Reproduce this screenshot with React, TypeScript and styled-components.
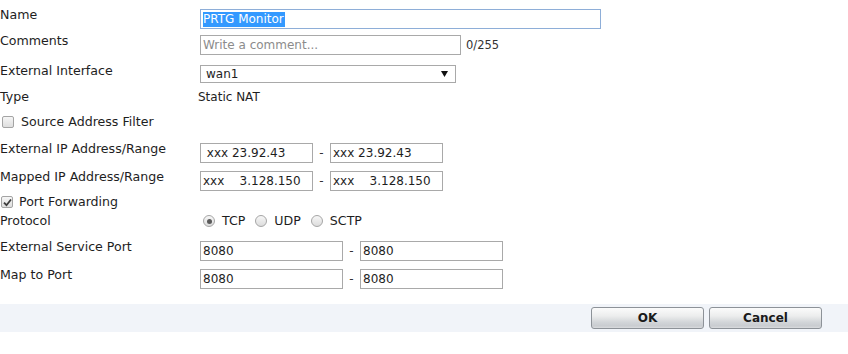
import React from "react";
import styled, { createGlobalStyle } from "styled-components";

const Global = createGlobalStyle`
  html, body { margin: 0; padding: 0; background: #ffffff; }
  body { font-family: "DejaVu Sans", Verdana, sans-serif; font-size: 12px; color: #1e1e1e; }
  * { box-sizing: border-box; }
`;

const Page = styled.div`
  width: 848px;
  height: 354px;
  display: flex;
  flex-direction: column;
`;

const Form = styled.div`
  padding-top: 9px;
  display: flex;
  flex-direction: column;
`;

const Row = styled.div<{ $h: number }>`
  height: ${(p) => p.$h}px;
  display: flex;
  align-items: flex-start;
`;

const Label = styled.div`
  width: 200px;
  flex: none;
  font-size: 12.6px;
  line-height: 12px;
  white-space: nowrap;
`;

const Value = styled.div`
  line-height: 12px;
  margin-left: -2px;
`;

const Controls = styled.div`
  display: flex;
  align-items: center;
`;

const NameBox = styled.div`
  width: 401px;
  height: 20px;
  border: 1px solid #8eaed8;
  padding: 1px 2px;
  display: flex;
  align-items: center;
  font-size: 12px;
`;

const Selected = styled.span`
  background: #3399ff;
  color: #ffffff;
  line-height: 15px;
  padding-right: 1px;
`;

const TextBox = styled.input<{ $w: number }>`
  width: ${(p) => p.$w}px;
  height: 20px;
  border: 1px solid #a9a9a9;
  padding: 0 2px;
  margin: 0;
  font-family: "DejaVu Sans", Verdana, sans-serif;
  font-size: 12px;
  color: #1e1e1e;
  background: #fff;
  outline: none;
  &::placeholder { color: #8c8c8c; }
`;

const Counter = styled.span`
  margin-left: 5px;
  font-size: 11.5px;
  color: #333;
`;

const SelectBox = styled.div`
  width: 256px;
  height: 18px;
  border: 1px solid #a9a9a9;
  padding: 0 7px 0 5px;
  display: flex;
  align-items: center;
  justify-content: space-between;
  line-height: 14px;
`;

const Dash = styled.span<{ $w: number }>`
  width: ${(p) => p.$w}px;
  text-align: center;
  color: #333;
`;

const CheckRow = styled.div<{ $x: number; $gap: number }>`
  display: flex;
  align-items: center;
  gap: ${(p) => p.$gap}px;
  padding-left: ${(p) => p.$x}px;
  font-size: 12.6px;
  line-height: 12px;
`;

const Box = styled.span`
  width: 12px;
  height: 12px;
  border: 1px solid #a4a4a4;
  border-radius: 2px;
  background: linear-gradient(#f6f6f6, #dedede);
  display: flex;
  align-items: center;
  justify-content: center;
`;

const Radios = styled.div`
  display: flex;
  align-items: center;
  font-size: 12.6px;
  line-height: 12px;
  padding-left: 3px;
`;

const RadioItem = styled.span`
  display: flex;
  align-items: center;
  gap: 7px;
  margin-right: 10px;
`;

const Radio = styled.span<{ $on?: boolean }>`
  width: 12px;
  height: 12px;
  border: 1px solid #a6a6a6;
  border-radius: 50%;
  background: linear-gradient(#f7f7f7, #dcdcdc);
  display: flex;
  align-items: center;
  justify-content: center;
  &::after {
    content: "";
    width: 5px;
    height: 5px;
    border-radius: 50%;
    background: ${(p) => (p.$on ? "#5a5a5a" : "transparent")};
  }
`;

const Footer = styled.div`
  height: 28px;
  background: #f1f4f9;
  display: flex;
  align-items: center;
  justify-content: flex-end;
  gap: 5px;
  padding-right: 26px;
`;

const Button = styled.button`
  width: 113px;
  height: 22px;
  border: 1px solid #8d9298;
  border-radius: 3px;
  background: linear-gradient(#fbfbfb 0%, #eceded 40%, #d3d6d9 70%, #c9ccd0 90%, #dadcdf 100%);
  font-family: "DejaVu Sans", Verdana, sans-serif;
  font-weight: bold;
  font-size: 12px;
  color: #1a1a1a;
  padding: 0;
`;

const Check = () => (
  <svg width="9" height="9" viewBox="0 0 9 9">
    <path d="M1 4.6 L3.5 7.2 L8 1.5" stroke="#3d3d3d" strokeWidth="1.8" fill="none" />
  </svg>
);

const Arrow = () => (
  <svg width="7" height="6" viewBox="0 0 7 6">
    <path d="M0 0 H7 L3.5 6 Z" fill="#111" />
  </svg>
);

export default function App() {
  return (
    <Page>
      <Global />
      <Form>
        <Row $h={26}>
          <Label>Name</Label>
          <NameBox>
            <Selected>PRTG Monitor</Selected>
          </NameBox>
        </Row>
        <Row $h={30}>
          <Label>Comments</Label>
          <Controls>
            <TextBox $w={261} placeholder="Write a comment..." readOnly />
            <Counter>0/255</Counter>
          </Controls>
        </Row>
        <Row $h={26}>
          <Label>External Interface</Label>
          <SelectBox>
            <span>wan1</span>
            <Arrow />
          </SelectBox>
        </Row>
        <Row $h={25}>
          <Label>Type</Label>
          <Value>Static NAT</Value>
        </Row>
        <Row $h={27}>
          <CheckRow $x={2} $gap={7}>
            <Box />
            <span>Source Address Filter</span>
          </CheckRow>
        </Row>
        <Row $h={28}>
          <Label>External IP Address/Range</Label>
          <Controls>
            <TextBox $w={113} value=" xxx 23.92.43" readOnly />
            <Dash $w={17}>-</Dash>
            <TextBox $w={113} value="xxx 23.92.43" readOnly />
          </Controls>
        </Row>
        <Row $h={25}>
          <Label>Mapped IP Address/Range</Label>
          <Controls>
            <TextBox $w={113} value="xxx    3.128.150" readOnly />
            <Dash $w={17}>-</Dash>
            <TextBox $w={113} value="xxx    3.128.150" readOnly />
          </Controls>
        </Row>
        <Row $h={19}>
          <CheckRow $x={1} $gap={6}>
            <Box>
              <Check />
            </Box>
            <span>Port Forwarding</span>
          </CheckRow>
        </Row>
        <Row $h={26}>
          <Label>Protocol</Label>
          <Radios>
            <RadioItem>
              <Radio $on />
              TCP
            </RadioItem>
            <RadioItem>
              <Radio />
              UDP
            </RadioItem>
            <RadioItem>
              <Radio />
              SCTP
            </RadioItem>
          </Radios>
        </Row>
        <Row $h={28}>
          <Label>External Service Port</Label>
          <Controls>
            <TextBox $w={143} value="8080" readOnly />
            <Dash $w={17}>-</Dash>
            <TextBox $w={143} value="8080" readOnly />
          </Controls>
        </Row>
        <Row $h={35}>
          <Label>Map to Port</Label>
          <Controls>
            <TextBox $w={143} value="8080" readOnly />
            <Dash $w={17}>-</Dash>
            <TextBox $w={143} value="8080" readOnly />
          </Controls>
        </Row>
      </Form>
      <Footer>
        <Button>OK</Button>
        <Button>Cancel</Button>
      </Footer>
    </Page>
  );
}
